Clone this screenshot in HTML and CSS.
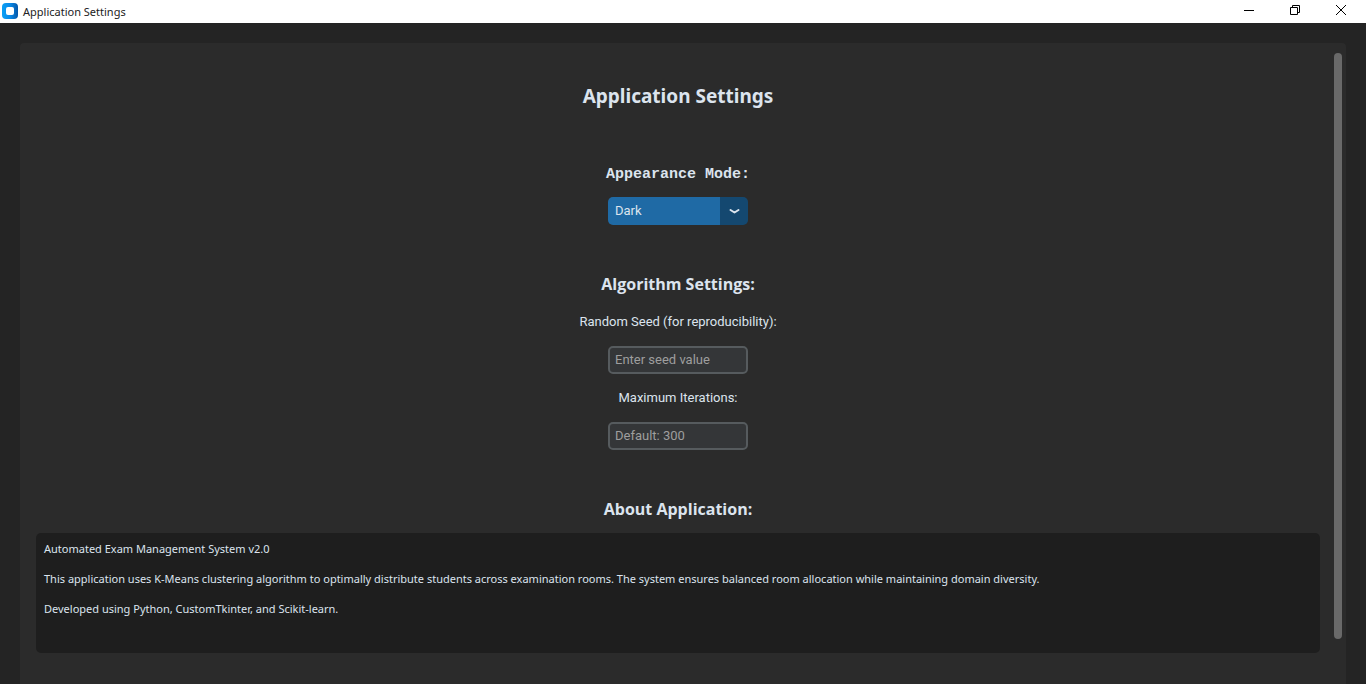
FILE: index.html
```html
<!DOCTYPE html>
<html lang="en">
<head>
<meta charset="utf-8">
<title>Application Settings</title>
<link rel="stylesheet" href="styles.css">
</head>
<body>
<header class="titlebar">
  <svg class="app-icon" viewBox="0 0 16 16" aria-hidden="true">
    <defs><linearGradient id="g" x1="0" y1="0" x2="1" y2="0"><stop offset="0" stop-color="#0aa0f5"/><stop offset=".5" stop-color="#0a8ae8"/><stop offset="1" stop-color="#0557a8"/></linearGradient></defs>
    <rect width="16" height="16" rx="4" fill="url(#g)"/>
    <rect x="4" y="4" width="8" height="8" rx="2" fill="#fff"/>
  </svg>
  <span class="window-title">Application Settings</span>
  <button class="win-button" aria-label="Minimize"><svg viewBox="0 0 12 12"><path d="M1 6.5h10"/></svg></button>
  <button class="win-button" aria-label="Restore"><svg viewBox="0 0 12 12"><path d="M1.500 3.500h7v7h-7zM3.500 3.500v-2h7v7h-2"/></svg></button>
  <button class="win-button" aria-label="Close"><svg viewBox="0 0 12 12"><path d="M1 1l10 10M11 1L1 11"/></svg></button>
</header>
<main class="panel">
  <form class="content">
    <h1 class="title">Application Settings</h1>
    <section class="group">
      <label class="heading mono" for="mode">Appearance Mode:</label>
      <div class="picker">
        <select class="select" id="mode"><option>Dark</option><option>Light</option><option>System</option></select>
        <svg class="arrow" viewBox="0 0 28 28" aria-hidden="true"><path d="M10.500 13l4 2.500 4-2.500"/></svg>
      </div>
    </section>
    <section class="group">
      <h2 class="heading">Algorithm Settings:</h2>
      <label class="label" for="seed">Random Seed (for reproducibility):</label>
      <input class="entry" id="seed" type="text" placeholder="Enter seed value">
      <label class="label" for="iter">Maximum Iterations:</label>
      <input class="entry" id="iter" type="text" placeholder="Default: 300">
    </section>
    <section class="group about-group">
      <h2 class="heading" id="about">About Application:</h2>
      <div class="about" role="region" aria-labelledby="about">
        <p>Automated Exam Management System v2.0</p>
        <p>This application uses K-Means clustering algorithm to optimally distribute students across examination rooms. The system ensures balanced room allocation while maintaining domain diversity.</p>
        <p>Developed using Python, CustomTkinter, and Scikit-learn.</p>
      </div>
    </section>
  </form>
  <div class="scroll-track"><div class="scroll-thumb"></div></div>
</main>
</body>
</html>
```
FILE: styles.css
```css
* { box-sizing: border-box; }
body {
  margin: 0;
  height: 100vh;
  display: flex;
  flex-direction: column;
  overflow: hidden;
  background: #242424;
  color: #dce4ee;
  font-family: "Noto Sans", sans-serif;
}
.titlebar {
  display: flex;
  align-items: flex-start;
  flex: none;
  height: 23px;
  padding: 0 2px;
  background: #fff;
  color: #222;
  font-size: 11px;
}
.app-icon { width: 16px; height: 16px; margin: 3px 5px 0 0; }
.window-title { flex: 1; line-height: 24px; }
.win-button {
  display: flex;
  align-items: center;
  justify-content: center;
  width: 46px;
  height: 20px;
  padding: 0;
  border: 0;
  background: none;
}
.win-button svg { width: 12px; height: 12px; fill: none; stroke: #000; }
.panel {
  flex: 1;
  display: flex;
  min-height: 0;
  margin: 20px 20px 0;
  background: #2b2b2b;
  border-radius: 4px 4px 0 0;
}
.content { flex: 1; padding: 36px 14px 31px 16px; text-align: center; }
.title { margin: 0 0 46px; font-size: 19px; line-height: 34px; font-weight: 700; }
.group { display: flex; flex-direction: column; align-items: center; margin-bottom: 45px; }
.heading { margin: 0 0 10px; font-family: "Open Sans", sans-serif; font-size: 16px; line-height: 28px; font-weight: 700; }
.mono { margin-bottom: 6px; font-family: "Liberation Mono", monospace; font-size: 15px; line-height: 32px; }
.picker { display: flex; position: relative; }
.select, .entry {
  width: 140px;
  height: 28px;
  border-radius: 5px;
  font-family: Roboto, sans-serif;
  font-size: 13px;
}
.select {
  appearance: none;
  padding: 0 7px 2px;
  border: 0;
  background: linear-gradient(to right, #1f6aa5 112px, #144870 112px);
  color: #dce4ee;
}
.arrow {
  position: absolute;
  right: 0;
  top: 0;
  width: 28px;
  height: 28px;
  fill: none;
  stroke: #dce4ee;
  stroke-width: 2;
  stroke-linecap: round;
  stroke-linejoin: round;
  pointer-events: none;
}
.label { margin-bottom: 10px; font-family: Roboto, sans-serif; font-size: 13px; line-height: 28px; }
.entry { padding: 0 5px 2px; border: 2px solid #565b5e; background: #343638; color: #dce4ee; }
.entry::placeholder { color: #9e9e9e; opacity: 1; }
.entry + .label { margin-top: 10px; }
.about-group { margin: 0; }
.about {
  width: 100%;
  min-height: 120px;
  padding: 8px;
  border-radius: 5px;
  background: #1e1e1e;
  text-align: left;
  font-size: 11px;
}
.about p { margin: 0 0 14px; line-height: 16px; }
.scroll-track { display: flex; width: 12px; padding: 10px 4px 45px 0; }
.scroll-thumb { flex: 1; border-radius: 4px; background: #696969; }
```
